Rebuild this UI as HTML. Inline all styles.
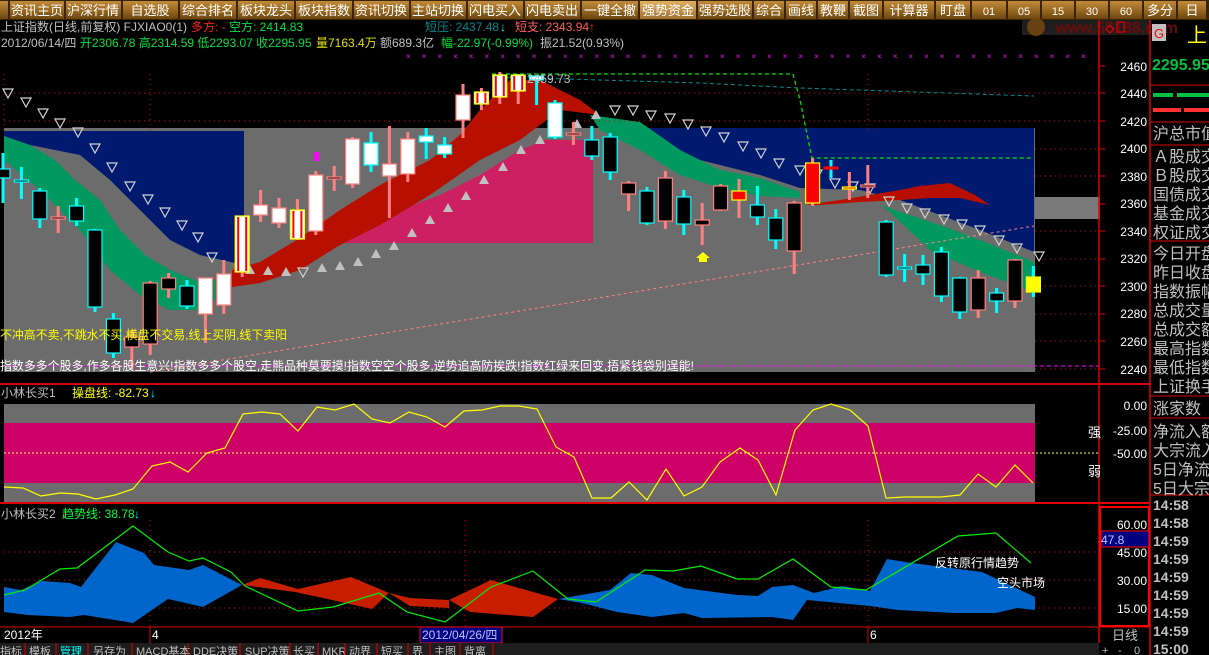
<!DOCTYPE html>
<html><head><meta charset="utf-8"><style>
*{margin:0;padding:0}
body{width:1209px;height:655px;background:#000;overflow:hidden;position:relative;font-family:"Liberation Sans","Noto Sans CJK SC",sans-serif}
svg{position:absolute;left:0;top:0}
text{font-family:"Liberation Sans","Noto Sans CJK SC",sans-serif}
</style></head><body>
<svg id="s" width="1209" height="655" xmlns="http://www.w3.org/2000/svg">
<defs><linearGradient id="bt" x1="0" y1="0" x2="0" y2="1"><stop offset="0" stop-color="#c08a3a"/><stop offset=".5" stop-color="#9a6a22"/><stop offset="1" stop-color="#6b4510"/></linearGradient>
<linearGradient id="bh" x1="0" y1="0" x2="0" y2="1"><stop offset="0" stop-color="#e0b060"/><stop offset="1" stop-color="#a07030"/></linearGradient></defs>
<rect x="0" y="0" width="1209" height="20" fill="#3a2508"/>
<g font-size="13" fill="#fff" text-anchor="middle">
<rect x="0" y="1" width="8" height="18" fill="url(#bt)"/>
<rect x="10" y="1" width="54" height="18" fill="url(#bt)"/><text x="37" y="15">资讯主页</text>
<rect x="66" y="1" width="55" height="18" fill="url(#bt)"/><text x="93" y="15">沪深行情</text>
<rect x="123" y="1" width="55" height="18" fill="url(#bt)"/><text x="150" y="15">自选股</text>
<rect x="180" y="1" width="56" height="18" fill="url(#bt)"/><text x="208" y="15">综合排名</text>
<rect x="238" y="1" width="56" height="18" fill="url(#bt)"/><text x="266" y="15">板块龙头</text>
<rect x="296" y="1" width="56" height="18" fill="url(#bt)"/><text x="324" y="15">板块指数</text>
<rect x="354" y="1" width="55" height="18" fill="url(#bt)"/><text x="381" y="15">资讯切换</text>
<rect x="411" y="1" width="55" height="18" fill="url(#bt)"/><text x="438" y="15">主站切换</text>
<rect x="468" y="1" width="55" height="18" fill="url(#bt)"/><text x="495" y="15">闪电买入</text>
<rect x="525" y="1" width="55" height="18" fill="url(#bt)"/><text x="552" y="15">闪电卖出</text>
<rect x="582" y="1" width="56" height="18" fill="url(#bt)"/><text x="610" y="15">一键全撤</text>
<rect x="640" y="1" width="56" height="18" fill="url(#bh)"/><text x="668" y="15">强势资金</text>
<rect x="698" y="1" width="54" height="18" fill="url(#bt)"/><text x="725" y="15">强势选股</text>
<rect x="754" y="1" width="30" height="18" fill="url(#bt)"/><text x="769" y="15">综合</text>
<rect x="786" y="1" width="30" height="18" fill="url(#bt)"/><text x="801" y="15">画线</text>
<rect x="818" y="1" width="30" height="18" fill="url(#bt)"/><text x="833" y="15">教鞭</text>
<rect x="850" y="1" width="32" height="18" fill="url(#bt)"/><text x="866" y="15">截图</text>
<rect x="884" y="1" width="50" height="18" fill="url(#bt)"/><text x="909" y="15">计算器</text>
<rect x="936" y="1" width="34" height="18" fill="url(#bt)"/><text x="953" y="15">盯盘</text>
<rect x="972" y="1" width="34" height="18" fill="url(#bt)"/><text x="989" y="15" font-size="11">01</text>
<rect x="1008" y="1" width="32" height="18" fill="url(#bt)"/><text x="1024" y="15" font-size="11">05</text>
<rect x="1042" y="1" width="32" height="18" fill="url(#bt)"/><text x="1058" y="15" font-size="11">15</text>
<rect x="1076" y="1" width="32" height="18" fill="url(#bt)"/><text x="1092" y="15" font-size="11">30</text>
<rect x="1110" y="1" width="32" height="18" fill="url(#bt)"/><text x="1126" y="15" font-size="11">60</text>
<rect x="1144" y="1" width="32" height="18" fill="url(#bt)"/><text x="1160" y="15">多分</text>
<rect x="1178" y="1" width="28" height="18" fill="url(#bt)"/><text x="1192" y="15">日</text>
</g>
<rect x="1022" y="20" width="128" height="15" fill="#1e1e1e"/>
<circle cx="1036" cy="27" r="9" fill="#7a4a10" opacity=".8"/>
<text x="1055" y="33" font-size="16" font-weight="bold" fill="#6a0c0c">www.55188.com</text>
<path d="M1106 29l4-4 4 4-4 4z" fill="none" stroke="#e00"/><rect x="1117" y="22" width="7" height="10" fill="none" stroke="#e00"/>
<g font-size="12">
<text x="1" y="31" fill="#c0c0c0">上证指数(日线,前复权) FJXIAO0(1)</text>
<text x="191" y="31" fill="#ff2020">多方: -</text>
<text x="229" y="31" fill="#00e040">空方: 2414.83</text>
<text x="425" y="31" fill="#008a8a">短压: 2437.48</text><text x="500" y="31" fill="#00ffff">↓</text>
<text x="515" y="31" fill="#ff6060">短支: 2343.94</text><text x="589" y="31" fill="#ff2020">↑</text>
<text x="1" y="47" fill="#c0c0c0">2012/06/14/四</text>
<text x="80" y="47" fill="#00e040">开2306.78 高2314.59 低2293.07 收2295.95</text>
<text x="316" y="47" fill="#e0e000">量7163.4万</text>
<text x="380" y="47" fill="#c0c0c0">额689.3亿</text>
<text x="441" y="47" fill="#00e040">幅-22.97(-0.99%)</text>
<text x="540" y="47" fill="#c0c0c0">振21.52(0.93%)</text>
</g>
<g id="xm" fill="#ff00ff" font-size="8"></g>
<rect x="4" y="128" width="1031" height="244" fill="#6c6c6c"/>
<polygon points="4,131 244,131 244,265 200,255 170,240 140,210 110,180 80,155 30,145 4,140" fill="#001a70"/>
<polygon points="600,128 1034,128 1034,252 980,230 940,215 900,200 860,190 800,188 760,175 700,160 640,135" fill="#001a70"/>
<polygon points="4,136 30,145 55,160 75,180 100,200 120,230 145,255 170,270 200,282 230,278 230,290 200,310 170,310 140,295 110,270 80,230 40,190 4,160" fill="#009a60"/>
<polygon points="590,115 640,122 680,150 720,170 760,178 800,192 800,198 760,196 720,188 680,175 640,150 600,130" fill="#009a60"/>
<polygon points="880,205 940,225 980,240 1034,262 1034,292 980,272 930,250 890,212" fill="#009a60"/>
<polygon points="320,243 360,225 400,210 440,195 480,175 520,150 545,140 593,140 593,243" fill="#cc2060"/>
<polygon points="232,270 260,262 300,238 340,210 380,185 430,160 460,135 480,110 510,80 540,80 580,100 600,115 560,110 520,140 480,160 430,195 380,225 340,245 300,270 260,283 232,287" fill="#b81000"/>
<polygon points="805,205 840,200 870,195 900,190 920,186 950,183 975,195 990,205 960,198 930,198 900,200 860,202 820,205" fill="#b81000"/>
<rect x="1035" y="197" width="65" height="22" fill="#7a7a7a"/>
<g stroke="#e00000" stroke-dasharray="1,4" stroke-width="1">
<line x1="4" y1="93" x2="1100" y2="93"/><line x1="4" y1="121" x2="1100" y2="121"/>
<line x1="1035" y1="149" x2="1100" y2="149"/><line x1="1035" y1="176" x2="1100" y2="176"/><line x1="1035" y1="231" x2="1100" y2="231"/><line x1="1035" y1="259" x2="1100" y2="259"/><line x1="1035" y1="286" x2="1100" y2="286"/><line x1="1035" y1="314" x2="1100" y2="314"/><line x1="1035" y1="341" x2="1100" y2="341"/><line x1="1035" y1="369" x2="1100" y2="369"/>
<line x1="4" y1="74" x2="4" y2="130"/><line x1="150" y1="74" x2="150" y2="130"/><line x1="868" y1="74" x2="868" y2="130"/>
</g>
<polyline points="150,372 1034,226" fill="none" stroke="#ff8080" stroke-dasharray="3,3"/>
<line x1="4" y1="366" x2="1100" y2="366" stroke="#ff00ff" stroke-dasharray="4,3"/>
<polyline points="492,74 793,74 800,100 812,158 1034,158" fill="none" stroke="#00e000" stroke-dasharray="4,3" stroke-width="1.3"/>
<polyline points="500,77 700,83 800,88 1034,96" fill="none" stroke="#009090" stroke-dasharray="4,3"/>
<g id="cd"></g>
<text x="527" y="83" font-size="12" fill="#c0c0c0">2459.73</text>
<text x="0" y="339" font-size="12" fill="#ffff00" textLength="287" lengthAdjust="spacingAndGlyphs">不冲高不卖,不跳水不买,横盘不交易,线上买阴,线下卖阳</text>
<text x="0" y="370" font-size="12" fill="#ffffff" textLength="694" lengthAdjust="spacingAndGlyphs">指数多多个股多,作多各股生意兴!指数多多个股空,走熊品种莫要摸!指数空空个股多,逆势追高防挨跌!指数红绿来回变,捂紧钱袋别逞能!</text>
<line x1="0" y1="384" x2="1150" y2="384" stroke="#e00000" stroke-width="2"/>
<line x1="0" y1="503" x2="1150" y2="503" stroke="#e00000" stroke-width="2"/>
<line x1="0" y1="627" x2="1150" y2="627" stroke="#e00000" stroke-width="1"/>
<line x1="1099" y1="20" x2="1099" y2="643" stroke="#e00000" stroke-width="1.5"/>
<line x1="1150" y1="20" x2="1150" y2="655" stroke="#e00000" stroke-width="1.5"/>
<g font-size="12" fill="#fff" text-anchor="end">
<text x="1147" y="71">2460</text><text x="1147" y="98">2440</text><text x="1147" y="126">2420</text><text x="1147" y="153">2400</text><text x="1147" y="181">2380</text><text x="1147" y="208">2360</text><text x="1147" y="236">2340</text><text x="1147" y="263">2320</text><text x="1147" y="291">2300</text><text x="1147" y="318">2280</text><text x="1147" y="346">2260</text><text x="1147" y="374">2240</text>
<text x="1147" y="410">0.00</text><text x="1147" y="435">-25.00</text><text x="1147" y="458">-50.00</text>
<text x="1147" y="529">60.00</text><text x="1147" y="557">45.00</text><text x="1147" y="585">30.00</text><text x="1147" y="613">15.00</text>
</g>
<g stroke="#e00000"><line x1="1099" y1="66" x2="1105" y2="66"/><line x1="1099" y1="93" x2="1105" y2="93"/><line x1="1099" y1="121" x2="1105" y2="121"/><line x1="1099" y1="149" x2="1105" y2="149"/><line x1="1099" y1="176" x2="1105" y2="176"/><line x1="1099" y1="204" x2="1105" y2="204"/><line x1="1099" y1="231" x2="1105" y2="231"/><line x1="1099" y1="259" x2="1105" y2="259"/><line x1="1099" y1="286" x2="1105" y2="286"/><line x1="1099" y1="314" x2="1105" y2="314"/><line x1="1099" y1="341" x2="1105" y2="341"/><line x1="1099" y1="369" x2="1105" y2="369"/></g>
<text x="1" y="397" font-size="12" fill="#c0c0c0">小林长买1</text>
<text x="72" y="397" font-size="12" fill="#ffff00">操盘线: -82.73</text><text x="150" y="397" font-size="12" fill="#00ffff">↓</text>
<rect x="4" y="404" width="1031" height="98" fill="#6c6c6c"/>
<rect x="4" y="423" width="1031" height="60" fill="#cc0066"/>
<line x1="4" y1="453" x2="1100" y2="453" stroke="#ffff60" stroke-dasharray="2,2"/>
<polyline fill="none" stroke="#ffff00" stroke-width="1.2" points="4,487 23,488 41,496 60,493 78,494 96,499 115,495 133,489 152,466 170,462 188,472 207,453 225,448 243,414 262,412 280,414 298,431 317,407 335,410 354,404 372,419 390,423 409,412 427,417 445,427 464,411 482,410 500,406 519,406 537,409 556,447 574,457 592,498 611,498 629,482 647,500 666,469 684,496 702,487 720,462 740,448 758,460 776,495 795,430 813,410 831,404 850,410 868,426 886,498 905,497 923,497 941,497 960,495 978,474 996,487 1015,465 1033,483"/>
<text x="1088" y="437" font-size="13" fill="#fff">强</text><text x="1088" y="476" font-size="13" fill="#fff">弱</text>
<text x="1" y="518" font-size="12" fill="#c0c0c0">小林长买2</text>
<text x="62" y="518" font-size="12" fill="#00ff40">趋势线: 38.78</text><text x="134" y="518" font-size="12" fill="#00ffff">↓</text>
<g stroke="#e00000" stroke-dasharray="1,4"><line x1="4" y1="552" x2="1100" y2="552"/><line x1="4" y1="580" x2="1100" y2="580"/><line x1="4" y1="608" x2="1100" y2="608"/><line x1="150" y1="520" x2="150" y2="627"/><line x1="465" y1="520" x2="465" y2="627"/><line x1="868" y1="520" x2="868" y2="627"/></g>
<polygon fill="#0066cc" points="4,587 21,590 42,581 70,583 81,587 116,542 144,553 154,565 189,570 203,565 242,585 203,607 168,599 133,623 84,615 70,617 28,615 4,612"/>
<polygon fill="#c81e00" points="242,585 260,578 298,589 351,577 389,593 372,609 323,598 295,592"/>
<polygon fill="#c81e00" points="389,593 410,598 449,600 449,608 410,606"/>
<polygon fill="#c81e00" points="449,600 491,580 558,599 533,617 470,612"/>
<polygon fill="#0066cc" points="558,599 610,590 631,573 652,575 684,588 737,595 758,596 772,587 793,585 814,593 842,586 870,591 887,559 912,563 982,572 1035,597 1035,610 1017,608 996,613 954,613 898,610 870,606 807,600 793,620 772,617 702,618 684,613 652,617 617,612 582,603"/>
<polyline fill="none" stroke="#00ee00" stroke-width="1.2" points="4,595 25,590 60,569 77,568 133,526 168,552 189,561 203,558 231,572 245,586 298,611 333,607 379,593 407,612 445,622 491,587 533,571 568,599 596,602 645,570 673,571 701,566 737,579 758,579 793,559 831,587 866,590 958,536 996,533 1031,563"/>
<text x="935" y="567" font-size="12" fill="#fff">反转原行情趋势</text>
<text x="997" y="587" font-size="12" fill="#fff">空头市场</text>
<rect x="1100" y="507" width="49" height="119" fill="none" stroke="#ff0000" stroke-width="2"/>
<rect x="1101" y="531" width="48" height="16" fill="#000080" stroke="#ff0000"/>
<text x="1101" y="544" font-size="12" fill="#c0c0ff">47.8</text>
<text x="4" y="639" font-size="12" fill="#fff">2012年</text>
<line x1="150" y1="627" x2="150" y2="643" stroke="#e00000"/>
<text x="152" y="639" font-size="12" fill="#fff">4</text>
<rect x="420" y="627" width="82" height="16" fill="#000080" stroke="#ff0000"/>
<text x="422" y="639" font-size="12" fill="#c0c0ff">2012/04/26/四</text>
<line x1="868" y1="627" x2="868" y2="643" stroke="#e00000"/>
<text x="870" y="639" font-size="12" fill="#fff">6</text>
<text x="1112" y="640" font-size="13" fill="#c0c0c0">日线</text>
<rect x="0" y="643" width="1099" height="12" fill="#1e1e1e"/>
<g font-size="11" fill="#c0c0c0">
<text x="0" y="655">指标</text><text x="29" y="655">模板</text><text x="60" y="655" fill="#00ffff">管理</text><text x="93" y="655">另存为</text><text x="136" y="655">MACD基本</text><text x="193" y="655">DDE决策</text><text x="245" y="655">SUP决策</text><text x="293" y="655">长买</text><text x="322" y="655">MKR</text><text x="349" y="655">动界</text><text x="381" y="655">短买</text><text x="412" y="655">界</text><text x="434" y="655">主图</text><text x="464" y="655">背离</text>
</g>
<g stroke="#e00000"><line x1="25" y1="643" x2="25" y2="655"/><line x1="56" y1="643" x2="56" y2="655"/><line x1="88" y1="643" x2="88" y2="655"/><line x1="132" y1="643" x2="132" y2="655"/><line x1="188" y1="643" x2="188" y2="655"/><line x1="240" y1="643" x2="240" y2="655"/><line x1="290" y1="643" x2="290" y2="655"/><line x1="318" y1="643" x2="318" y2="655"/><line x1="345" y1="643" x2="345" y2="655"/><line x1="377" y1="643" x2="377" y2="655"/><line x1="408" y1="643" x2="408" y2="655"/><line x1="430" y1="643" x2="430" y2="655"/><line x1="460" y1="643" x2="460" y2="655"/><line x1="493" y1="643" x2="493" y2="655"/></g>
<g font-size="11" fill="#c0c0c0"><text x="1102" y="654">+</text><text x="1118" y="654">-</text><text x="1134" y="654">0</text></g>
<rect x="1152" y="24" width="14" height="17" fill="#c0c0c0"/><text x="1154" y="38" font-size="13" fill="#ff0000">G</text>
<text x="1187" y="42" font-size="20" fill="#ffff00">上</text>
<text x="1152" y="70" font-size="16" font-weight="bold" fill="#00c040">2295.95</text>
<line x1="1150" y1="85" x2="1209" y2="85" stroke="#e00000"/>
<rect x="1153" y="93" width="20" height="4" fill="#00c040"/><rect x="1177" y="93" width="32" height="4" fill="#00c040"/>
<rect x="1153" y="108" width="28" height="4" fill="#ff3030"/><rect x="1184" y="108" width="25" height="4" fill="#ff3030"/>
<g stroke="#e00000"><line x1="1150" y1="122" x2="1209" y2="122"/><line x1="1150" y1="145" x2="1209" y2="145"/><line x1="1150" y1="241" x2="1209" y2="241"/><line x1="1150" y1="396" x2="1209" y2="396"/><line x1="1150" y1="418" x2="1209" y2="418"/><line x1="1150" y1="495" x2="1209" y2="495"/></g>
<g font-size="16" fill="#c0c0c0">
<text x="1153" y="139">沪总市值</text>
<text x="1153" y="162">Ａ股成交</text><text x="1153" y="181">Ｂ股成交</text><text x="1153" y="200">国债成交</text><text x="1153" y="219">基金成交</text><text x="1153" y="238">权证成交</text>
<text x="1153" y="259">今日开盘</text><text x="1153" y="278">昨日收盘</text><text x="1153" y="297">指数振幅</text><text x="1153" y="316">总成交量</text><text x="1153" y="335">总成交额</text><text x="1153" y="354">最高指数</text><text x="1153" y="373">最低指数</text><text x="1153" y="392">上证换手</text>
<text x="1153" y="414">涨家数</text>
<text x="1153" y="437">净流入额</text><text x="1153" y="456">大宗流入</text><text x="1153" y="475">5日净流</text><text x="1153" y="494">5日大宗</text>
</g>
<g font-size="14" font-weight="bold" fill="#c0c0c0">
<text x="1153" y="510">14:58</text><text x="1153" y="528">14:58</text><text x="1153" y="546">14:59</text><text x="1153" y="564">14:59</text><text x="1153" y="582">14:59</text><text x="1153" y="600">14:59</text><text x="1153" y="618">14:59</text><text x="1153" y="636">14:59</text><text x="1153" y="654">15:00</text>
</g>
</svg>
<script>
var NS="http://www.w3.org/2000/svg",cd=document.getElementById('cd');
function el(t,a){var e=document.createElementNS(NS,t);for(var k in a)e.setAttribute(k,a[k]);cd.appendChild(e);return e}
var xm=document.getElementById('xm');
for(var x=406;x<1085;x+=15.7){var e=document.createElementNS(NS,'text');e.setAttribute('x',x);e.setAttribute('y',59);e.textContent='×';xm.appendChild(e);}
var dn=[[8,93],[26,102],[43,113],[60,123],[78,132],[95,148],[112,167],[130,186],[148,199],[165,212],[182,225],[198,237],[212,257],[303,272],[615,110],[633,110],[651,115],[670,118],[688,124],[706,131],[724,137],[743,146],[761,153],[779,163],[800,170],[817,174],[835,183],[853,186],[870,188],[889,201],[907,208],[925,213],[944,219],[962,224],[980,230],[999,240],[1017,248],[1039,256]];
dn.forEach(function(p){el('polygon',{points:(p[0]-5)+','+(p[1]-4)+' '+(p[0]+5)+','+(p[1]-4)+' '+p[0]+','+(p[1]+5),fill:'none',stroke:'#d0d0d0','stroke-width':1.2})});
var up=[[250,270],[268,271],[286,272],[322,268],[340,266],[358,262],[376,254],[394,246],[412,233],[430,220],[448,208],[466,196],[484,180],[503,167],[521,150],[540,140],[558,129],[577,124],[596,115]];
up.forEach(function(p){el('polygon',{points:(p[0]-5)+','+(p[1]+4)+' '+(p[0]+5)+','+(p[1]+4)+' '+p[0]+','+(p[1]-5),fill:'#c0c0c0'})});
var C=[['c',169,178,153,203],['c',180,182,167,199],['c',191,219,188,228],['p',217,219,206,233],['c',206,221,198,226],['c',230,307,229,312],['c',319,353,313,358],['p',337,347,330,370],['p',283,344,281,355],['p',278,289,273,298],['c',286,306,280,309],['w',278,314,278,343],['w',274,305,260,314],['r',216,272,216,277],['w',205,215,190,222],['w',208,223,198,228],['r',210,239,199,240],['w',175,231,171,235],['p',177,179,166,191],['w',139,184,137,188],['wc',143,165,132,172],['w',164,176,126,218],['w',139,174,132,182],['wc',136,142,128,159],['wc',145,154,137,158],['w',95,120,84,138],['r',92,104,88,110],['r',75,97,72,104],['r',75,91,74,104],['wc',76,80,75,105],['wc',103,137,100,139],['p',133,135,122,145],['c',140,156,126,160],['c',137,172,133,180],['p',183,194,181,211],['c',191,223,187,225],['p',178,221,171,229],['c',197,224,190,235],['p',220,225,203,245],['p',186,210,184,211],['R',191,200,179,218],['c',205,217,186,225],['c',218,240,209,249],['p',203,251,201,274],['R',163,203,158,206],['d',167,169,160,178],['R',187,189,172,200],['p',185,187,165,198],['c',222,275,220,277],['c',267,269,254,282],['c',265,274,255,285],['c',252,296,247,302],['c',278,312,277,319],['p',278,310,270,318],['c',293,301,288,313],['p',260,301,259,308],['y',277,292,266,297]];
C.forEach(function(c,i){var x=3+i*18.4,t=c[0],wc=(t=='c'||t=='wc'||t=='d'||t=='y')?'#00ffff':'#ff8080';
el('line',{x1:x,y1:c[3],x2:x,y2:c[4],stroke:wc,'stroke-width':3});
var h=Math.max(c[2]-c[1],2),f='#000',s=wc;
if(t=='w'||t=='wc'||t=='r'){f='#fff'}
if(t=='R'){f='#ff0000';s='#ffff00'}
if(t=='r'){s='#ffff00'}
if(t=='y'){f='#ffff00';s='#ffff00'}
if(t=='d'){f='#ff0000';s='#ff0000'}
el('rect',{x:x-7,y:c[1],width:14,height:h,fill:f,stroke:s,'stroke-width':1.2});
if(t=='r'){el('rect',{x:x-5,y:c[1]+1,width:2,height:h-2,fill:'#ff0000'});el('rect',{x:x+3,y:c[1]+1,width:2,height:h-2,fill:'#ff0000'})}
});
el('rect',{x:314,y:152,width:5,height:9,fill:'#ff00ff'});
el('polygon',{points:'699,262 707,262 707,258 710,258 703,252 696,258 699,258',fill:'#ffff00'});
</script>
</body></html>
